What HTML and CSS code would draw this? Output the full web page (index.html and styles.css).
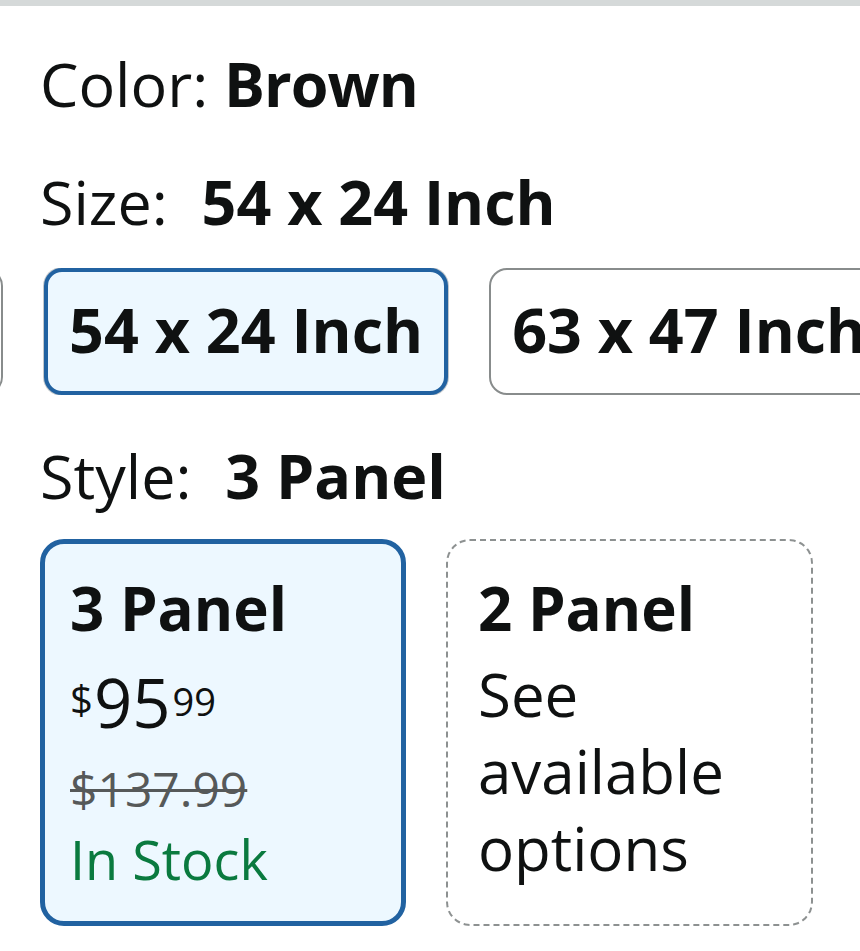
FILE: index.html
```html
<!DOCTYPE html>
<html lang="en">
<head>
<meta charset="utf-8">
<title>Product variations</title>
<link rel="stylesheet" href="styles.css">
</head>
<body>
<div class="topbar"></div>
<main class="variations">
  <div class="label label-color">Color: <b>Brown</b></div>
  <div class="label label-size">Size: <b class="sel-value">54 x 24 Inch</b></div>
  <div class="swatch-row">
    <div class="swatch-track">
      <div class="swatch">48 x 24 Inch</div>
      <div class="swatch swatch-selected">54 x 24 Inch</div>
      <div class="swatch">63 x 47 Inch</div>
    </div>
  </div>
  <div class="label label-style">Style: <b class="sel-value">3 Panel</b></div>
  <div class="cards">
    <div class="card card-selected">
      <div class="card-title">3 Panel</div>
      <div class="price">
        <span class="price-symbol">$</span><span class="price-whole">95</span><span class="price-fraction">99</span>
      </div>
      <div class="price-list">$137.99</div>
      <div class="stock">In Stock</div>
    </div>
    <div class="card card-unavailable">
      <div class="card-title">2 Panel</div>
      <div class="card-note">See available options</div>
    </div>
  </div>
</main>
</body>
</html>
```
FILE: styles.css
```css
html, body {
  margin: 0;
  padding: 0;
  background: #ffffff;
}

body {
  font-family: "Open Sans", "Noto Sans", sans-serif;
  color: #0f1111;
  overflow: hidden;
}

.topbar {
  height: 6px;
  background: #d5d9d9;
}

.variations {
  padding: 0 0 0 40px;
}

.label {
  font-size: 61px;
  line-height: 83px;
  white-space: nowrap;
}

.label b {
  font-weight: 700;
}

.label-color b {
  letter-spacing: -1px;
}

.label .sel-value {
  padding-left: 18px;
}

.label-color {
  margin-top: 36px;
}

.label-size {
  margin-top: 35px;
}

.swatch-row {
  margin: 25px 0 0 -40px;
  overflow: hidden;
}

.swatch-track {
  display: flex;
  gap: 41px;
  margin-left: -397px;
}

.swatch {
  flex: none;
  box-sizing: border-box;
  height: 127px;
  padding: 0 21px 4px;
  border: 2px solid #888c8c;
  border-radius: 18px;
  background: #ffffff;
  font-size: 61px;
  font-weight: 700;
  line-height: 119px;
  white-space: nowrap;
}

.swatch-selected {
  border: 4px solid #2162a1;
  background: #edf8ff;
  line-height: 115px;
  box-shadow: 0 0 0 1px rgba(120, 130, 140, 0.45);
}

.label-style {
  margin-top: 39px;
}

.cards {
  display: grid;
  grid-template-columns: 366px 367px;
  column-gap: 40px;
  margin-top: 22px;
}

.card {
  box-sizing: border-box;
  border-radius: 24px;
}

.card-selected {
  border: 5px solid #2162a1;
  background: #edf8ff;
  padding: 24px 20px 27px 25px;
}

.card-unavailable {
  border: 2px dashed #8d9191;
  padding: 27px 20px 36px 30px;
}

.card-title {
  font-size: 60px;
  font-weight: 700;
  line-height: 80px;
}

.price {
  display: flex;
  align-items: flex-start;
  margin-top: 21px;
  line-height: 1;
}

.price-symbol {
  font-size: 40px;
  margin-top: 10px;
}

.price-whole {
  font-size: 67px;
  margin-left: 1px;
}

.price-fraction {
  font-size: 38px;
  margin-top: 13px;
  margin-left: 2px;
}

.price-list {
  margin-top: 18px;
  font-size: 48px;
  line-height: 70px;
  color: #565959;
  text-decoration: line-through;
  text-decoration-thickness: 3px;
}

.stock {
  font-size: 54px;
  line-height: 70px;
  color: #0a7a3f;
}

.card-note {
  margin-top: 8px;
  font-size: 60px;
  line-height: 77px;
}
```
